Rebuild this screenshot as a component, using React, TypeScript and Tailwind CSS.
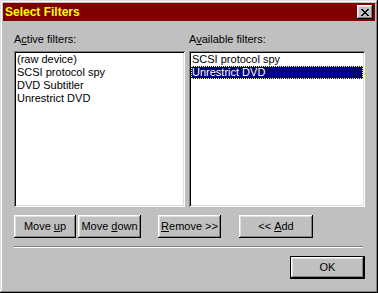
import React from "react";

const raised =
  "shadow-[inset_-1px_-1px_#000,inset_1px_1px_#fff,inset_-2px_-2px_#808080,inset_2px_2px_#dfdfdf]";
const sunken =
  "shadow-[inset_1px_1px_#808080,inset_-1px_-1px_#fff,inset_2px_2px_#000,inset_-2px_-2px_#dfdfdf]";

const Btn = ({ children, w, def }: { children: React.ReactNode; w: string; def?: boolean }) => (
  <button
    className={`${w} h-[23px] flex items-center justify-center bg-[#c0c0c0] text-black ${
      def ? "border border-black" : ""
    }`}
  >
    <span className={`w-full h-full flex items-center justify-center ${raised}`}>{children}</span>
  </button>
);

const ListBox = ({ items, selected, w }: { items: string[]; selected?: number; w: string }) => (
  <div className={`${w} h-[156px] bg-white p-[2px] ${sunken}`}>
    {items.map((it, i) => (
      <div
        key={it}
        className={`h-[13px] leading-[13px] pl-[1px] whitespace-nowrap ${
          i === selected ? "bg-[#000080] text-white outline-1 outline-dotted outline-[#ffff80] -outline-offset-1" : "text-black"
        }`}
      >
        {it}
      </div>
    ))}
  </div>
);

export default function App() {
  return (
    <div
      className={`w-[378px] h-[293px] bg-[#c0c0c0] p-[3px] flex flex-col text-[11px] ${"shadow-[inset_-1px_-1px_#000,inset_1px_1px_#dfdfdf,inset_-2px_-2px_#808080,inset_2px_2px_#fff]"}`}
      style={{ fontFamily: '"Liberation Sans", Arial, sans-serif' }}
    >
      {/* title bar */}
      <div className="h-[18px] bg-[#800000] flex items-center justify-between pl-[2px] pr-[2px]">
        <span className="text-[#ffff00] font-bold text-[12px] leading-none">Select Filters</span>
        <button className={`w-[16px] h-[14px] bg-[#c0c0c0] flex items-center justify-center ${raised}`}>
          <svg width="8" height="7" viewBox="0 0 8 7" shapeRendering="crispEdges">
            <path
              d="M0 0h2v1h1v1h2v-1h1v-1h2v1h-1v1h-1v1h-1v1h1v1h1v1h1v1h-2v-1h-1v-1h-2v1h-1v1h-2v-1h1v-1h1v-1h1v-1h-1v-1h-1v-1h-1z"
              fill="#000"
            />
          </svg>
        </button>
      </div>

      {/* lists */}
      <div className="flex gap-[4px] pl-[11px] pt-[12px]">
        <div className="flex flex-col gap-[5px]">
          <span className="h-[13px] leading-[13px] text-black">
            A<span className="underline">c</span>tive filters:
          </span>
          <ListBox w="w-[171px]" items={["(raw device)", "SCSI protocol spy", "DVD Subtitler", "Unrestrict DVD"]} />
        </div>
        <div className="flex flex-col gap-[5px]">
          <span className="h-[13px] leading-[13px] text-black">
            A<span className="underline">v</span>ailable filters:
          </span>
          <ListBox w="w-[176px]" items={["SCSI protocol spy", "Unrestrict DVD"]} selected={1} />
        </div>
      </div>

      {/* action buttons */}
      <div className="flex pl-[11px] mt-[8px]">
        <Btn w="w-[62px]">
          Move <span className="underline ml-[3px]">u</span>p
        </Btn>
        <div className="w-[2px]" />
        <Btn w="w-[63px]">
          Move <span className="underline ml-[3px]">d</span>own
        </Btn>
        <div className="w-[17px]" />
        <Btn w="w-[63px]">
          <span className="underline">R</span>emove &gt;&gt;
        </Btn>
        <div className="w-[18px]" />
        <Btn w="w-[74px]">
          &lt;&lt; <span className="underline ml-[3px]">A</span>dd
        </Btn>
      </div>

      {/* separator */}
      <div className="ml-[11px] mr-[12px] mt-[8px] h-[2px] border-t border-[#808080] border-b border-b-white" />

      <div className="flex justify-end pr-[10px] mt-[8px]">
        <Btn w="w-[75px]" def>
          OK
        </Btn>
      </div>
    </div>
  );
}
